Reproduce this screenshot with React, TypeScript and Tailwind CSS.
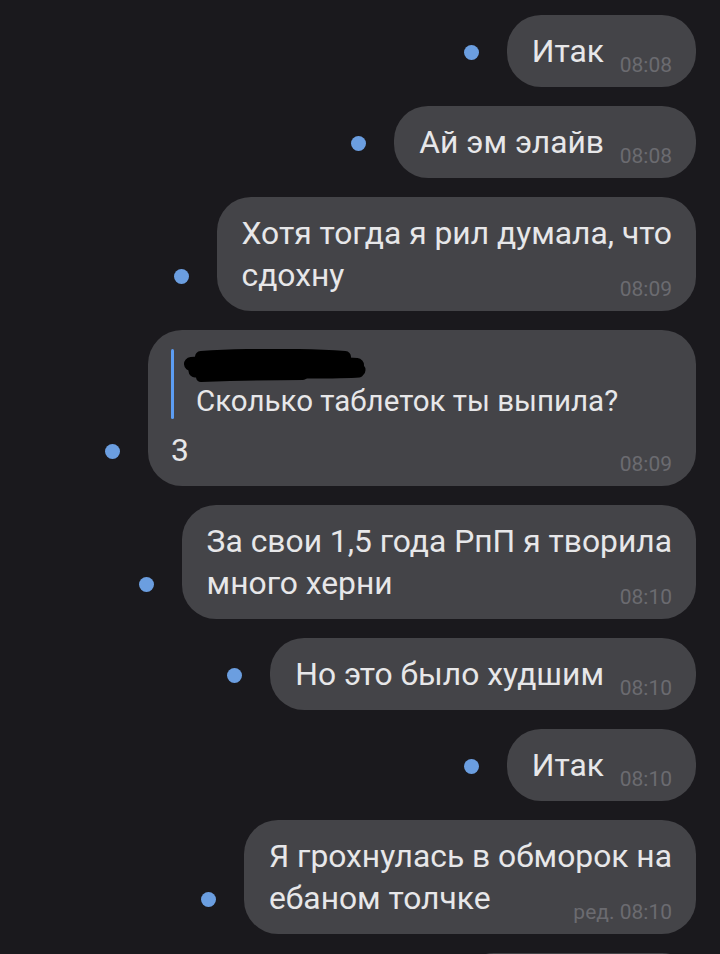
import type { ReactNode } from "react";

type Msg = {
  lines: string[];
  time: string;
  spacer?: string;
};

const MESSAGES_TOP: Msg[] = [
  { lines: ["Итак"], time: "08:08" },
  { lines: ["Ай эм элайв"], time: "08:08" },
  { lines: ["Хотя тогда я рил думала, что", "сдохну"], time: "08:09" },
];

const MESSAGES_BOTTOM: Msg[] = [
  { lines: ["За свои 1,5 года РпП я творила", "много херни"], time: "08:10" },
  { lines: ["Но это было худшим"], time: "08:10" },
  { lines: ["Итак"], time: "08:10" },
  {
    lines: ["Я грохнулась в обморок на", "ебаном толчке"],
    time: "ред. 08:10",
    spacer: "w-[120px]",
  },
];

function Dot() {
  return <span className="mb-[27px] h-[15px] w-[15px] shrink-0 rounded-full bg-[#6b9ee0]" />;
}

function Row({ children }: { children: ReactNode }) {
  return <div className="flex items-end justify-end gap-[28px] pr-[24px]">{children}</div>;
}

function Time({ value }: { value: string }) {
  return (
    <span className="absolute bottom-[11px] right-[24px] text-[21px] leading-[21px] text-[#6b6b70]">
      {value}
    </span>
  );
}

function Bubble({ msg }: { msg: Msg }) {
  const last = msg.lines.length - 1;
  return (
    <div className="relative whitespace-nowrap rounded-[34px] bg-[#444448] py-[15px] pl-[25px] pr-[24px] text-[31.8px] leading-[42px] text-[#e7e7e9]">
      {msg.lines.map((line, i) => (
        <div key={i}>
          {line}
          {i === last && <span className={`inline-block ${msg.spacer ?? "w-[68px]"}`} />}
        </div>
      ))}
      <Time value={msg.time} />
    </div>
  );
}

// redacted sender name, black marker scribble
function Scribble() {
  return (
    <svg width="184" height="36" viewBox="0 0 184 36" className="-ml-[13px] block">
      <g stroke="#000" strokeLinecap="round" strokeLinejoin="round" fill="none">
        <path d="M18 8 C60 5 120 5 162 8" strokeWidth="12" />
        <path d="M8 15 C50 12 120 12 174 16" strokeWidth="14" />
        <path d="M12 22 C70 19 130 19 176 21" strokeWidth="13" />
        <path d="M18 28 C50 27 90 26 120 26" strokeWidth="10" />
        <path d="M120 25 C150 25 165 25 176 24" strokeWidth="9" />
      </g>
    </svg>
  );
}

function QuoteBubble() {
  return (
    <div className="relative w-[548px] whitespace-nowrap rounded-[34px] bg-[#444448] pt-[15px] pb-[15px] pl-[23px] pr-[24px] text-[31.8px] leading-[42px] text-[#e7e7e9]">
      <div className="mt-[4px] mb-[10px] flex">
        <div className="w-[3px] rounded-full bg-[#5c9df3]" />
        <div className="pl-[22px]">
          <div className="h-[34px]">
            <Scribble />
          </div>
          <div className="text-[29.5px] leading-[36px]">Сколько таблеток ты выпила?</div>
        </div>
      </div>
      <div>3</div>
      <Time value="08:09" />
    </div>
  );
}

export default function App() {
  return (
    <div className="flex h-[954px] w-[720px] flex-col gap-[19px] overflow-hidden bg-[#1a191d] pt-[15px] font-['Roboto',sans-serif]">
      {MESSAGES_TOP.map((m, i) => (
        <Row key={`t${i}`}>
          <Dot />
          <Bubble msg={m} />
        </Row>
      ))}
      <Row>
        <Dot />
        <QuoteBubble />
      </Row>
      {MESSAGES_BOTTOM.map((m, i) => (
        <Row key={`b${i}`}>
          <Dot />
          <Bubble msg={m} />
        </Row>
      ))}
      <Row>
        <div className="h-[72px] w-[236px] shrink-0 rounded-[34px] bg-[#444448]" />
      </Row>
    </div>
  );
}
